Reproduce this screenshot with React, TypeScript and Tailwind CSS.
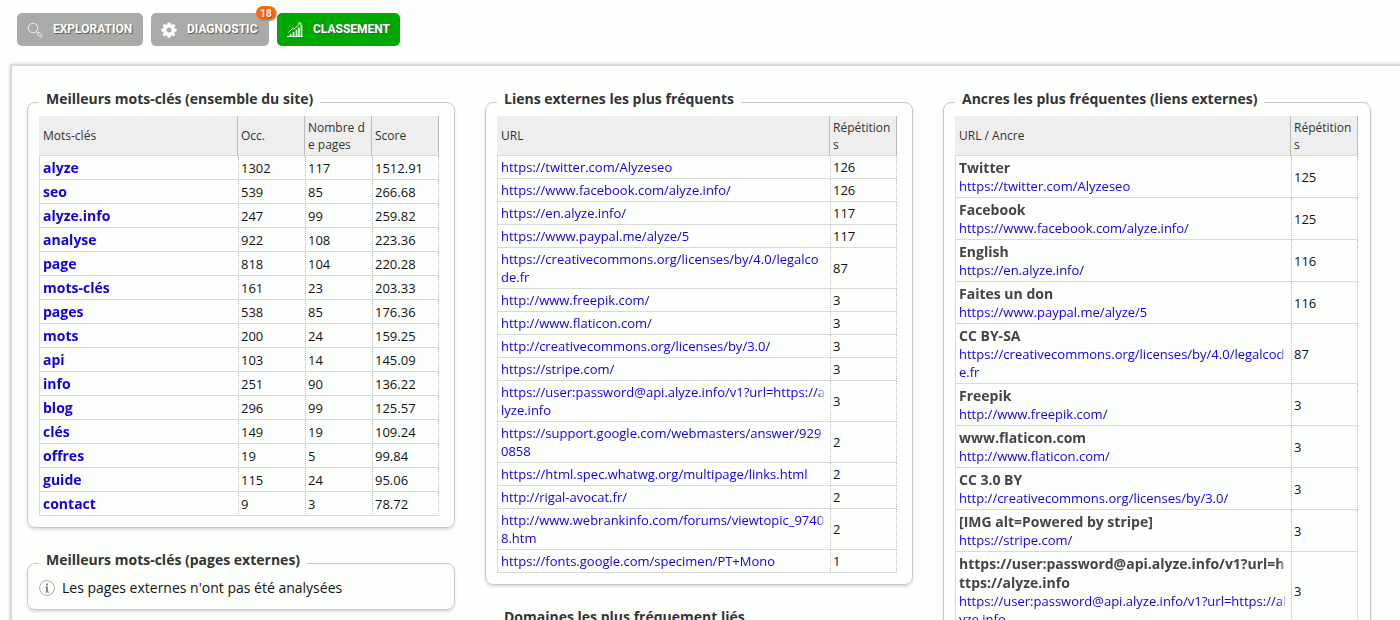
import type { ReactNode } from "react";

const keywords = [
  ["alyze", "1302", "117", "1512.91"],
  ["seo", "539", "85", "266.68"],
  ["alyze.info", "247", "99", "259.82"],
  ["analyse", "922", "108", "223.36"],
  ["page", "818", "104", "220.28"],
  ["mots-clés", "161", "23", "203.33"],
  ["pages", "538", "85", "176.36"],
  ["mots", "200", "24", "159.25"],
  ["api", "103", "14", "145.09"],
  ["info", "251", "90", "136.22"],
  ["blog", "296", "99", "125.57"],
  ["clés", "149", "19", "109.24"],
  ["offres", "19", "5", "99.84"],
  ["guide", "115", "24", "95.06"],
  ["contact", "9", "3", "78.72"],
];

const links = [
  { url: "https://twitter.com/Alyzeseo", count: 126 },
  { url: "https://www.facebook.com/alyze.info/", count: 126 },
  { url: "https://en.alyze.info/", count: 117 },
  { url: "https://www.paypal.me/alyze/5", count: 117 },
  { url: "https://creativecommons.org/licenses/by/4.0/legalcode.fr", count: 87 },
  { url: "http://www.freepik.com/", count: 3 },
  { url: "http://www.flaticon.com/", count: 3 },
  { url: "http://creativecommons.org/licenses/by/3.0/", count: 3 },
  { url: "https://stripe.com/", count: 3 },
  { url: "https://user:password@api.alyze.info/v1?url=https://alyze.info", count: 3 },
  { url: "https://support.google.com/webmasters/answer/9290858", count: 2 },
  { url: "https://html.spec.whatwg.org/multipage/links.html", count: 2 },
  { url: "http://rigal-avocat.fr/", count: 2 },
  { url: "http://www.webrankinfo.com/forums/viewtopic_97408.htm", count: 2 },
  { url: "https://fonts.google.com/specimen/PT+Mono", count: 1 },
];

const anchors = [
  { text: "Twitter", url: "https://twitter.com/Alyzeseo", count: 125 },
  { text: "Facebook", url: "https://www.facebook.com/alyze.info/", count: 125 },
  { text: "English", url: "https://en.alyze.info/", count: 116 },
  { text: "Faites un don", url: "https://www.paypal.me/alyze/5", count: 116 },
  { text: "CC BY-SA", url: "https://creativecommons.org/licenses/by/4.0/legalcode.fr", count: 87 },
  { text: "Freepik", url: "http://www.freepik.com/", count: 3 },
  { text: "www.flaticon.com", url: "http://www.flaticon.com/", count: 3 },
  { text: "CC 3.0 BY", url: "http://creativecommons.org/licenses/by/3.0/", count: 3 },
  { text: "[IMG alt=Powered by stripe]", url: "https://stripe.com/", count: 3 },
  {
    text: "https://user:password@api.alyze.info/v1?url=https://alyze.info",
    url: "https://user:password@api.alyze.info/v1?url=https://alyze.info",
    count: 3,
  },
];

function SearchIcon() {
  return (
    <svg viewBox="0 0 16 16" className="size-4" fill="none" stroke="#f0f0f0" aria-hidden="true">
      <circle cx="6" cy="6" r="4.8" />
      <path d="M9.4 9.4l1.4 1.4" />
      <path d="M10.2 11.8l1.5-1.5 3.6 3.4-1.7 1.7z" />
    </svg>
  );
}

function GearIcon() {
  return (
    <svg viewBox="0 0 16 16" className="size-4" fill="#fff" aria-hidden="true">
      <path
        fillRule="evenodd"
        d="M6.6.5h2.8l.4 2.1 1 .4 1.8-1.2 1.8 1.9-1.3 1.7.5 1.1 2.1.3v2.6l-2.1.4-.4 1.1 1.2 1.7-1.9 1.9-1.7-1.2-1.1.4-.4 2.1H6.6l-.4-2.1-1.1-.4-1.7 1.2-1.9-1.9 1.2-1.7-.4-1.1L.3 9.4V6.8l2.1-.4.4-1L1.6 3.7l1.9-1.9L5.2 3l1-.4zM8 5.6a2.5 2.5 0 1 0 0 5 2.5 2.5 0 0 0 0-5z"
      />
    </svg>
  );
}

function ChartIcon() {
  return (
    <svg viewBox="0 0 16 16" className="size-4" fill="none" stroke="#e8ffe8" aria-hidden="true">
      <path d="M0 14.5h16" />
      <path d="M3.5 14v-2M6.5 14v-4M9.5 14V7.500M12 14V5.500M14.500 14V3" strokeWidth="1.700" />
      <path d="M1.500 10.500L5 7l3-.5L13.500 1M11 1h3v3" />
    </svg>
  );
}

function InfoIcon() {
  return (
    <svg viewBox="0 0 16 16" className="size-4" fill="none" aria-hidden="true">
      <circle cx="8" cy="8" r="7.4" stroke="#aaa" />
      <path d="M7 3.5h2v2H7zM6 6.500h3v5h1v1H6v-1h1v-4H6z" fill="#888" />
    </svg>
  );
}

function Tab({ icon, label, className, badge }: { icon: ReactNode; label: string; className: string; badge?: number }) {
  return (
    <button
      type="button"
      className={`relative flex h-[33px] items-center rounded-[5px] pb-0.5 pl-2.5 text-white ${className}`}
    >
      <span className="mt-0.5 w-[26px]">{icon}</span>
      <span className="font-[Roboto,sans-serif] text-[12px] font-bold [text-shadow:1px_1px_1px_#555]">
        {label}
      </span>
      {badge && (
        <span className="absolute -top-[7px] -right-[7px] z-10 flex h-[14px] w-5 items-center justify-center rounded-full bg-[#ff6a00] font-[Roboto,sans-serif] text-[10px] font-bold shadow-[1px_1px_1px_#999] [text-shadow:1px_1px_1px_#555]">
          {badge}
        </span>
      )}
    </button>
  );
}

function Box({ title, className = "pr-[15px]", children }: { title: string; className?: string; children?: ReactNode }) {
  return (
    <fieldset
      className={`min-w-0 rounded-lg border border-[#c8cac8] pb-[11px] pl-[11px] shadow-[0_2px_3px_#ddd] ${className}`}
    >
      <legend className="px-[7px] pb-[7px] text-[14px] leading-[20px] font-bold text-[#333]">{title}</legend>
      {children}
    </fieldset>
  );
}

function DataTable({ heads, children }: { heads: string[]; children: ReactNode }) {
  return (
    <table className="w-full table-fixed border-separate border-spacing-0 text-[13px] leading-[18px] break-all">
      <thead>
        <tr className="h-10 bg-[#edeeed] text-left text-[12px] leading-[17px] text-[#333]">
          {heads.map((head, index) => (
            <th
              key={head}
              className={`border-r border-b border-r-[#bbb] border-b-[#d8dad8] px-[3px] font-normal ${
                index === 0 ? "pl-1" : "w-[67px]"
              }`}
            >
              {head}
            </th>
          ))}
        </tr>
      </thead>
      <tbody>{children}</tbody>
    </table>
  );
}

// long urls fade out towards the right edge of the cell
function LabelCell({ children }: { children: ReactNode }) {
  return (
    <td className="border-b border-l border-[#d8dad8] py-0.5 pr-1 pl-[3px]">
      <div className="[mask-image:linear-gradient(to_left,transparent,black_8px)]">{children}</div>
    </td>
  );
}

function NumberCell({ children }: { children: ReactNode }) {
  return (
    <td className="border-b border-l border-b-[#d8dad8] border-l-[#bbb] px-0.5 py-0.5 text-[#111] [border-left-style:dotted] last:border-r last:border-r-[#bbb] last:[border-right-style:dotted]">
      {children}
    </td>
  );
}

export default function App() {
  return (
    <div className="min-h-screen bg-[#fdfffd] pt-[13px] pl-2.5 font-['Open_Sans','Noto_Sans',sans-serif] text-[#111]">
      <nav className="flex gap-2 pl-[7px]">
        <Tab icon={<SearchIcon />} label="EXPLORATION" className="w-[126px] bg-[#a9aba9]" />
        <Tab icon={<GearIcon />} label="DIAGNOSTIC" className="w-[118px] bg-[#a9aba9]" badge={18} />
        <Tab icon={<ChartIcon />} label="CLASSEMENT" className="w-[123px] bg-[#00a800]" />
      </nav>

      <main className="mt-[18px] grid grid-cols-3 items-start gap-[30px] border-t-2 border-l-2 border-[#d8dad8] pt-[23px] pr-[29px] pb-8 pl-[15px] shadow-[0_0_3px_#ccc]">
        <div className="flex min-w-0 flex-col gap-[22px]">
          <Box title="Meilleurs mots-clés (ensemble du site)">
            <DataTable heads={["Mots-clés", "Occ.", "Nombre de pages", "Score"]}>
              {keywords.map(([word, ...values]) => (
                <tr key={word}>
                  <LabelCell>
                    <a href="#" className="block text-[14px] leading-[19px] font-bold text-[#1200dd]">
                      {word}
                    </a>
                  </LabelCell>
                  {values.map((value, index) => (
                    <NumberCell key={index}>{value}</NumberCell>
                  ))}
                </tr>
              ))}
            </DataTable>
          </Box>

          <Box title="Meilleurs mots-clés (pages externes)">
            <p className="flex items-center gap-[7px] pt-px text-[14px] leading-[20px]">
              <InfoIcon />
              Les pages externes n'ont pas été analysées
            </p>
          </Box>
        </div>

        <div className="flex min-w-0 flex-col gap-[22px]">
          <Box title="Liens externes les plus fréquents">
            <DataTable heads={["URL", "Répétitions"]}>
              {links.map((link) => (
                <tr key={link.url}>
                  <LabelCell>
                    <a href={link.url} className="block text-[#1200dd]">
                      {link.url}
                    </a>
                  </LabelCell>
                  <NumberCell>{link.count}</NumberCell>
                </tr>
              ))}
            </DataTable>
          </Box>

          <Box title="Domaines les plus fréquement liés" />
        </div>

        <Box title="Ancres les plus fréquentes (liens externes)" className="pr-3">
          <DataTable heads={["URL / Ancre", "Répétitions"]}>
            {anchors.map((anchor) => (
              <tr key={anchor.text}>
                <LabelCell>
                  <strong className="block text-[14px] leading-[19px] font-bold text-[#444]">{anchor.text}</strong>
                  <a href={anchor.url} className="block text-[#1200dd]">
                    {anchor.url}
                  </a>
                </LabelCell>
                <NumberCell>{anchor.count}</NumberCell>
              </tr>
            ))}
          </DataTable>
        </Box>
      </main>
    </div>
  );
}
